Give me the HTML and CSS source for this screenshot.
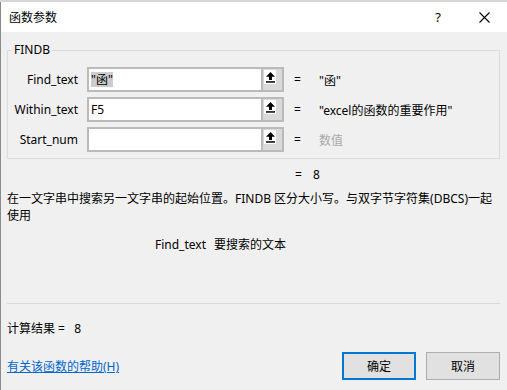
FILE: index.html
```html
<!DOCTYPE html>
<html lang="zh-CN">
<head>
    <meta charset="UTF-8">
    <meta name="viewport" content="width=device-width, initial-scale=1.0">
    <title>函数参数</title>
    <link rel="stylesheet" href="styles.css">
</head>
<body>
    <div class="backdrop"></div>
    <div class="dialog">
        <div class="titlebar">
            <span class="title">函数参数</span>
            <span class="help-btn">?</span>
            <svg class="close-btn" width="11" height="11" viewBox="0 0 11 11">
                <path d="M0.5 0.5 L10.5 10.5 M10.5 0.5 L0.5 10.5" stroke="#000" stroke-width="1.1" fill="none"/>
            </svg>
        </div>

        <div class="content">
            <fieldset class="args">
                <legend>FINDB</legend>
                <div class="arg-grid">
                    <label class="arg-name">Find_text</label>
                    <div class="arg-input">
                        <span class="field"><span class="selected">"函"</span></span>
                        <span class="ref-btn"><span class="ref-icon"><svg width="11" height="12" viewBox="0 0 11 12"><path d="M5.5 1 L1 5.8 L4 5.8 L4 9 L7 9 L7 5.8 L10 5.8 Z" fill="#000"/><rect x="1" y="10.2" width="9" height="1.5" fill="#000"/></svg></span></span>
                    </div>
                    <span class="eq">=</span>
                    <span class="arg-value">"函"</span>

                    <label class="arg-name">Within_text</label>
                    <div class="arg-input">
                        <span class="field">F5</span>
                        <span class="ref-btn"><span class="ref-icon"><svg width="11" height="12" viewBox="0 0 11 12"><path d="M5.5 1 L1 5.8 L4 5.8 L4 9 L7 9 L7 5.8 L10 5.8 Z" fill="#000"/><rect x="1" y="10.2" width="9" height="1.5" fill="#000"/></svg></span></span>
                    </div>
                    <span class="eq">=</span>
                    <span class="arg-value">"excel的函数的重要作用"</span>

                    <label class="arg-name">Start_num</label>
                    <div class="arg-input">
                        <span class="field"></span>
                        <span class="ref-btn"><span class="ref-icon"><svg width="11" height="12" viewBox="0 0 11 12"><path d="M5.5 1 L1 5.8 L4 5.8 L4 9 L7 9 L7 5.8 L10 5.8 Z" fill="#000"/><rect x="1" y="10.2" width="9" height="1.5" fill="#000"/></svg></span></span>
                    </div>
                    <span class="eq">=</span>
                    <span class="arg-value muted">数值</span>
                </div>
            </fieldset>

            <div class="result-line"><span class="eq">=</span>8</div>

            <p class="desc">在一文字串中搜索另一文字串的起始位置。FINDB 区分大小写。与双字节字符集(DBCS)一起<br>使用</p>

            <div class="arg-help"><span class="arg-help-name">Find_text</span>要搜索的文本</div>

            <hr class="sep">

            <div class="calc">计算结果 =&nbsp;&nbsp;&nbsp;8</div>

            <div class="footer">
                <a href="#help" class="help-link">有关该函数的帮助(H)</a>
                <div class="buttons">
                    <button class="btn primary">确定</button>
                    <button class="btn">取消</button>
                </div>
            </div>
        </div>
    </div>
</body>
</html>
```

FILE: styles.css
```css
body {
    margin: 0;
    padding: 0;
    width: 507px;
    height: 390px;
    overflow: hidden;
    font-family: "Noto Sans", "Noto Sans CJK SC", sans-serif;
    font-size: 12px;
    color: #000;
    background-color: #f0f0f0;
}
.backdrop {
    height: 2px;
    background-color: #d6d6d6;
}
.dialog {
    border-left: 1px solid #8a8a8a;
    height: 388px;
    background-color: #f0f0f0;
}
.titlebar {
    display: flex;
    align-items: center;
    height: 30px;
    background-color: #fff;
    padding-left: 8px;
}
.title {
    font-size: 12px;
    flex: 1;
}
.help-btn {
    font-size: 13px;
    margin-right: 38px;
}
.close-btn {
    margin-right: 17px;
}
.content {
    padding: 0 7px 0 6px;
}
.args {
    margin: 10px 0 0 0;
    padding: 9px 0 6px 0;
    border: 1px solid #dcdcdc;
    min-width: 0;
}
.args legend {
    padding: 0 2px;
    margin-left: 4px;
    line-height: 16px;
    height: 16px;
}
.arg-grid {
    display: grid;
    grid-template-columns: 70px 197px 17px 1fr;
    column-gap: 9px;
    row-gap: 5px;
    align-items: center;
}
.arg-grid .eq {
    margin-left: 1px;
}
.arg-name {
    text-align: right;
    white-space: nowrap;
}
.arg-input {
    display: flex;
    height: 25px;
    box-sizing: border-box;
    border: 2px solid #bababa;
    background-color: #fff;
}
.field {
    flex: 1;
    display: flex;
    align-items: center;
    padding-left: 2px;
    border-right: 2px solid #bababa;
}
.selected {
    background-color: #cccccc;
    line-height: 15px;
}
.ref-btn {
    width: 19px;
    background-color: #dadada;
    display: flex;
    align-items: flex-start;
    padding-top: 1px;
}
.ref-icon {
    width: 12px;
    height: 14px;
    background-color: #fff;
    display: flex;
    justify-content: center;
    align-items: center;
    margin-left: 1px;
}
.arg-value {
    white-space: nowrap;
}
.muted {
    color: #a8a8a8;
}
.result-line {
    margin-top: 8px;
    height: 16px;
    line-height: 16px;
    padding-left: 288px;
}
.result-line .eq {
    display: inline-block;
    width: 18px;
}
.desc {
    margin: 7px 0 0 0;
    line-height: 17px;
    white-space: nowrap;
}
.arg-help {
    margin-top: 13px;
    height: 16px;
    line-height: 16px;
    padding-left: 148px;
}
.arg-help-name {
    display: inline-block;
    width: 59px;
}
.sep {
    margin: 50px 0 0 0;
    border: none;
    border-top: 1px solid #d9d9d9;
    height: 0;
}
.calc {
    margin-top: 17px;
    height: 16px;
    line-height: 16px;
}
.footer {
    display: flex;
    justify-content: space-between;
    align-items: center;
    margin-top: 15px;
}
.help-link {
    color: #0066cc;
    text-decoration: underline;
}
.buttons {
    display: flex;
    gap: 10px;
}
.btn {
    width: 74px;
    height: 28px;
    box-sizing: border-box;
    font-family: inherit;
    font-size: 12px;
    background-color: #e1e1e1;
    border: 1px solid #adadad;
    padding: 0;
    color: #000;
}
.btn.primary {
    border: 2px solid #0078d7;
}
```
